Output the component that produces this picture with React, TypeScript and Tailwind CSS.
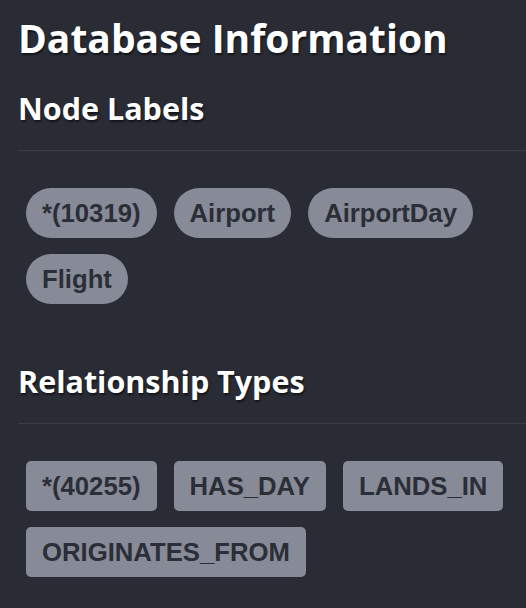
const nodeLabels = ['*(10319)', 'Airport', 'AirportDay', 'Flight'];
const relTypes = ['*(40255)', 'HAS_DAY', 'LANDS_IN', 'ORIGINATES_FROM'];

const headingFont = { fontFamily: '"Open Sans", "DejaVu Sans", sans-serif' };
const pillFont = { fontFamily: '"Liberation Sans", Arial, sans-serif' };

const Section = ({ title, items, rounded }: { title: string; items: string[]; rounded: string }) => (
  <div>
    <h2
      className="pb-[24px] border-b border-[#3a3d46] text-[30.5px] leading-[36px] font-bold text-white [text-shadow:1px_2px_2px_rgba(0,0,0,0.55)]"
      style={headingFont}
    >
      {title}
    </h2>
    <div className="flex flex-wrap gap-x-[17px] gap-y-[16px] pl-[8px] pt-[37px]">
      {items.map((item) => (
        <span
          key={item}
          className={`h-[50px] px-[16px] text-[25.7px] leading-[50px] font-bold bg-[#878a97] text-[#2b2e37] ${rounded}`}
          style={pillFont}
        >
          {item}
        </span>
      ))}
    </div>
  </div>
);

export default function App() {
  return (
    <div className="min-h-[608px] w-[526px] bg-[#292c35] pl-[18px] pt-[14px] overflow-hidden">
      <h1
        className="text-[39px] leading-[48px] font-bold text-white [text-shadow:1px_2px_2px_rgba(0,0,0,0.55)]"
        style={headingFont}
      >
        Database Information
      </h1>
      <div className="mt-[28px]">
        <Section title="Node Labels" items={nodeLabels} rounded="rounded-full" />
      </div>
      <div className="mt-[59px]">
        <Section title="Relationship Types" items={relTypes} rounded="rounded-[5px]" />
      </div>
    </div>
  );
}
